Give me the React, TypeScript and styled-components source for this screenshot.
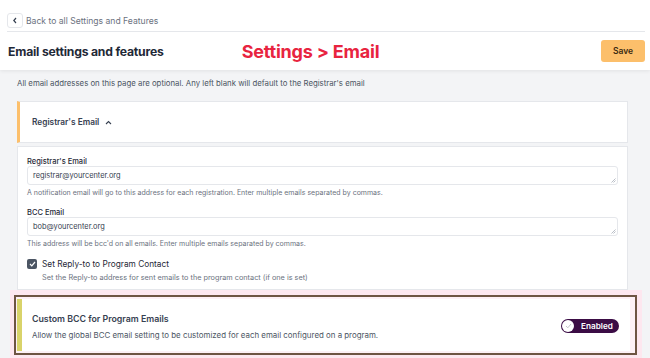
import styled, { createGlobalStyle } from "styled-components";

const GlobalStyle = createGlobalStyle`
  body {
    margin: 0;
    background: #f3f4f6;
    font-family: Inter, "Noto Sans", sans-serif;
    color: #1f2937;
  }
  * { box-sizing: border-box; }
`;

const Page = styled.div`
  width: 650px;
  height: 358px;
  overflow: hidden;
`;

const TopBar = styled.header`
  background: #fff;
  padding: 13px 5px 0 7px;
  box-shadow: 0 1px 4px rgba(0, 0, 0, 0.08);
  position: relative;
`;

const BackRow = styled.div`
  display: flex;
  align-items: center;
  height: 15px;
`;

const BackButton = styled.button`
  width: 16px;
  height: 15px;
  padding: 0;
  border: 1px solid #e5e7eb;
  border-radius: 3px;
  background: #fff;
  display: flex;
  align-items: center;
  justify-content: center;
  color: #374151;
`;

const BackText = styled.span`
  margin-left: 3px;
  font-size: 8.6px;
  color: #6b7280;
`;

const Divider = styled.div`
  margin-top: 3px;
  border-top: 1px solid #e5e7eb;
`;

const TitleRow = styled.div`
  height: 38px;
  display: flex;
  align-items: center;
`;

const Title = styled.h1`
  margin: 0 0 0 1px;
  font-size: 12.2px;
  font-weight: 700;
  color: #1f2937;
  letter-spacing: -0.2px;
`;

const Banner = styled.span`
  margin-left: 78px;
  font-size: 18px;
  font-weight: 700;
  color: #e8243f;
  letter-spacing: -0.2px;
`;

const SaveButton = styled.button`
  margin-left: auto;
  width: 44px;
  height: 22px;
  border: none;
  border-radius: 3px;
  background: #fcbf6b;
  color: #3a2a12;
  font-family: inherit;
  font-size: 8.5px;
  font-weight: 600;
`;

const Main = styled.main`
  padding: 0 22px 0 17px;
`;

const Info = styled.p`
  margin: 0;
  padding: 8px 0 0;
  height: 31px;
  font-size: 7.8px;
  line-height: 10px;
  color: #4b5563;
`;

const Card = styled.div<{ $accent?: string }>`
  background: #fff;
  border: 1px solid #e5e7eb;
  border-left: ${(p) => (p.$accent ? `3px solid ${p.$accent}` : "1px solid #e5e7eb")};
`;

const SectionHead = styled(Card)`
  height: 42px;
  display: flex;
  align-items: center;
  padding-left: 12px;
  font-size: 8.3px;
  font-weight: 600;
  color: #374151;
  gap: 6px;
`;

const SectionBody = styled(Card)`
  margin-top: 3px;
  height: 144px;
  padding: 10px 9px 0;
`;

const Label = styled.div<{ $top?: number }>`
  margin-top: ${(p) => p.$top ?? 0}px;
  font-size: 7.5px;
  line-height: 9px;
  font-weight: 500;
  color: #1f2937;
`;

const Field = styled.div`
  position: relative;
  height: 19px;
  border: 1px solid #e5e7eb;
  border-radius: 3px;
  padding: 3px 5px;
  font-size: 7.4px;
  line-height: 11px;
  color: #374151;
`;

const Grip = styled.svg`
  position: absolute;
  right: 1px;
  bottom: 1px;
`;

const Help = styled.div`
  margin-top: 3px;
  font-size: 7px;
  line-height: 10px;
  color: #6b7280;
`;

const CheckRow = styled.div`
  margin-top: 9px;
  display: flex;
  gap: 5px;
`;

const CheckBox = styled.span`
  width: 10px;
  height: 10px;
  margin-top: 1px;
  border-radius: 2px;
  background: #4b5563;
  display: flex;
  align-items: center;
  justify-content: center;
`;

const CheckTitle = styled.div`
  font-size: 8.3px;
  line-height: 12px;
  color: #1f2937;
`;

const CheckSub = styled.div`
  margin-top: 2px;
  font-size: 7.3px;
  line-height: 11px;
  color: #6b7280;
`;

const Highlight = styled.div`
  margin: 0 -14px 0 -7px;
  padding: 5px 5px 3px 4px;
  background: #fde7ef;
`;

const Framed = styled.div`
  border: 2px solid #6e5442;
  padding: 2px 5px 2px 1px;
  background: #fdf0f5;
`;

const FeatureCard = styled.div`
  height: 52px;
  background: #fff;
  border-left: 5px solid #d9d36a;
  display: flex;
  align-items: center;
  padding: 0 11px 0 10px;
`;

const FeatureText = styled.div`
  flex: 1;
  padding-top: 3px;
`;

const FeatureTitle = styled.div`
  font-size: 8.8px;
  line-height: 11px;
  font-weight: 600;
  color: #374151;
`;

const FeatureDesc = styled.div`
  margin-top: 6px;
  font-size: 7.9px;
  line-height: 11px;
  color: #4b5563;
`;

const Toggle = styled.div`
  width: 58px;
  height: 14px;
  border-radius: 7px;
  background: #3b0c45;
  display: flex;
  align-items: center;
  padding: 0 1px;
  gap: 7px;
  margin-top: 1px;
`;

const Knob = styled.span`
  width: 12px;
  height: 12px;
  border-radius: 50%;
  background: #fff;
  display: flex;
  align-items: center;
  justify-content: center;
`;

const ToggleText = styled.span`
  font-size: 8.2px;
  font-weight: 600;
  color: #fff;
`;

function ResizeGrip() {
  return (
    <Grip width="5" height="5" viewBox="0 0 5 5">
      <path d="M4.5 0.5 L0.5 4.5 M4.5 2.5 L2.5 4.5" stroke="#9ca3af" strokeWidth="0.7" />
    </Grip>
  );
}

export default function App() {
  return (
    <Page>
      <GlobalStyle />
      <TopBar>
        <BackRow>
          <BackButton aria-label="Back">
            <svg width="6" height="7" viewBox="0 0 6 7">
              <path d="M4 1 L1.8 3.5 L4 6" fill="none" stroke="#374151" strokeWidth="1.2" />
            </svg>
          </BackButton>
          <BackText>Back to all Settings and Features</BackText>
        </BackRow>
        <Divider />
        <TitleRow>
          <Title>Email settings and features</Title>
          <Banner>Settings &gt; Email</Banner>
          <SaveButton>Save</SaveButton>
        </TitleRow>
      </TopBar>

      <Main>
        <Info>
          All email addresses on this page are optional. Any left blank will default to the Registrar's email
        </Info>

        <SectionHead $accent="#fcbf6b">
          Registrar's Email
          <svg width="7" height="5" viewBox="0 0 7 5">
            <path d="M1 4 L3.5 1.5 L6 4" fill="none" stroke="#374151" strokeWidth="1.1" />
          </svg>
        </SectionHead>

        <SectionBody>
          <Label>Registrar's Email</Label>
          <Field>
            registrar@yourcenter.org
            <ResizeGrip />
          </Field>
          <Help>A notification email will go to this address for each registration. Enter multiple emails separated by commas.</Help>

          <Label $top={10}>BCC Email</Label>
          <Field>
            bob@yourcenter.org
            <ResizeGrip />
          </Field>
          <Help>This address will be bcc'd on all emails. Enter multiple emails separated by commas.</Help>

          <CheckRow>
            <CheckBox>
              <svg width="7" height="6" viewBox="0 0 7 6">
                <path d="M1 3 L2.8 4.8 L6 1" fill="none" stroke="#fff" strokeWidth="1.2" />
              </svg>
            </CheckBox>
            <div>
              <CheckTitle>Set Reply-to to Program Contact</CheckTitle>
              <CheckSub>Set the Reply-to address for sent emails to the program contact (if one is set)</CheckSub>
            </div>
          </CheckRow>
        </SectionBody>

        <Highlight>
          <Framed>
            <FeatureCard>
              <FeatureText>
                <FeatureTitle>Custom BCC for Program Emails</FeatureTitle>
                <FeatureDesc>Allow the global BCC email setting to be customized for each email configured on a program.</FeatureDesc>
              </FeatureText>
              <Toggle>
                <Knob>
                  <svg width="7" height="6" viewBox="0 0 7 6">
                    <path d="M1 3 L2.8 4.8 L6 1" fill="none" stroke="#c4c4cc" strokeWidth="1" />
                  </svg>
                </Knob>
                <ToggleText>Enabled</ToggleText>
              </Toggle>
            </FeatureCard>
          </Framed>
        </Highlight>
      </Main>
    </Page>
  );
}
